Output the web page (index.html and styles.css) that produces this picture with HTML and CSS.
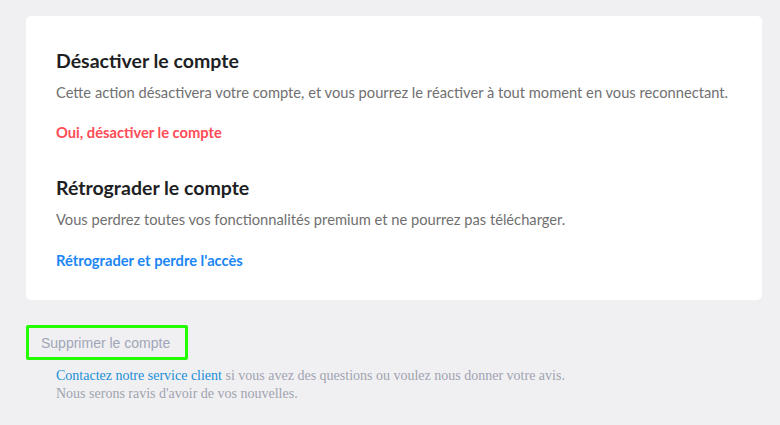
FILE: index.html
```html
<!DOCTYPE html>
<html lang="fr">
<head>
<meta charset="utf-8">
<link rel="stylesheet" href="styles.css">
</head>
<body>
<div class="page">
  <section class="card">
    <div class="block">
      <h2 class="title">Désactiver le compte</h2>
      <p class="desc">Cette action désactivera votre compte, et vous pourrez le réactiver à tout moment en vous reconnectant.</p>
      <a class="action red">Oui, désactiver le compte</a>
    </div>
    <div class="block">
      <h2 class="title">Rétrograder le compte</h2>
      <p class="desc">Vous perdrez toutes vos fonctionnalités premium et ne pourrez pas télécharger.</p>
      <a class="action blue">Rétrograder et perdre l'accès</a>
    </div>
  </section>
  <button class="delete">Supprimer le compte</button>
  <p class="contact"><a class="contact-link">Contactez notre service client</a> si vous avez des questions ou voulez nous donner votre avis.<br>Nous serons ravis d'avoir de vos nouvelles.</p>
</div>
</body>
</html>
```
FILE: styles.css
```css
html, body {
  margin: 0;
  padding: 0;
  background: #f0f0f2;
}
.page {
  padding: 16px 18px 0 26px;
}
.card {
  background: #ffffff;
  border-radius: 5px;
  padding: 33px 30px 30px 30px;
  height: 284px;
  box-sizing: border-box;
  display: flex;
  flex-direction: column;
  gap: 35px;
}
.block {
  display: flex;
  flex-direction: column;
}
.title {
  margin: 0;
  font-family: Lato, sans-serif;
  font-weight: 700;
  font-size: 19.5px;
  line-height: 24px;
  color: #1e1f24;
}
.desc {
  margin: 9px 0 0 0;
  font-family: Lato, sans-serif;
  font-size: 14.7px;
  line-height: 20px;
  color: #707070;
}
.action {
  margin-top: 21px;
  font-family: Lato, sans-serif;
  font-weight: 700;
  font-size: 14.7px;
  line-height: 18px;
}
.blue { margin-top: 22px; }
.red { color: #ff4b55; }
.blue { color: #1a86f5; }
.delete {
  display: block;
  margin-top: 25px;
  box-sizing: border-box;
  width: 162px;
  height: 35px;
  padding: 0 0 0 12px;
  text-align: left;
  background: transparent;
  border: 3px solid #22ff00;
  border-radius: 2px;
  font-family: "Liberation Sans", Arial, sans-serif;
  font-size: 14px;
  color: #a0a6b8;
}
.contact {
  margin: 7px 0 0 30px;
  font-family: "Liberation Serif", "Times New Roman", serif;
  font-size: 14px;
  line-height: 18px;
  color: #a0a3b0;
}
.contact-link {
  color: #1a8fd6;
}
```
